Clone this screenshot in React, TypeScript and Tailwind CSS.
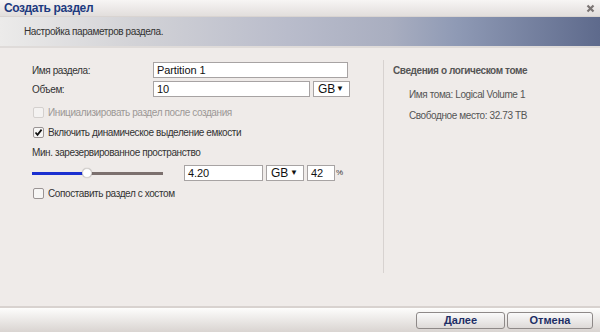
import React from "react";

function Checkbox({ checked, disabled }: { checked?: boolean; disabled?: boolean }) {
  return (
    <span
      className={`flex h-[11px] w-[11px] items-center justify-center rounded-[2px] border ${
        disabled ? "border-[#d4d0ce] bg-[#f4f2f1]" : "border-[#9a9494] bg-[#f7f6f5]"
      }`}
    >
      {checked && (
        <svg width="9" height="9" viewBox="0 0 9 9">
          <path d="M1.5 4.5 L3.5 6.8 L7.6 1.6" fill="none" stroke="#111" strokeWidth="1.7" />
        </svg>
      )}
    </span>
  );
}

function Select({ w }: { w: string }) {
  return (
    <div className={`flex h-[16px] ${w} items-center justify-between border border-[#a7a3a3] bg-white pl-[4px] pr-[5px] text-[12px] tracking-normal text-[#111]`}>
      <span>GB</span>
      <span className="text-[8px]">▼</span>
    </div>
  );
}

export default function App() {
  return (
    <div
      className="flex h-[332px] w-[600px] flex-col overflow-hidden bg-[#efebe9] text-[10px] tracking-[-0.4px] text-[#333]"
      style={{ fontFamily: '"Liberation Sans", Arial, sans-serif' }}
    >
      {/* Title bar */}
      <div className="flex h-[17px] items-center justify-between border-b border-[#d9d4d1] bg-gradient-to-b from-[#f7f5f4] to-[#e2dedc] pl-[4px] pr-[5px]">
        <span className="text-[12px] font-bold tracking-[-0.4px] text-[#1d3a80]">Создать раздел</span>
        <svg width="9" height="9" viewBox="0 0 9 9">
          <path d="M1.5 1.5 L7.5 7.5 M7.5 1.5 L1.5 7.5" stroke="#7b7574" strokeWidth="2.2" />
        </svg>
      </div>
      {/* Banner */}
      <div
        className="flex h-[31px] items-center border-b-2 border-[#dfdbd9] pl-[24px] text-[#333]"
        style={{
          background:
            "linear-gradient(to right, #ecebea 0%, #d3d3d7 22%, #b9bccb 48%, #a9aec0 65%, #8f9ab5 76%, #5e6a8c 100%)",
        }}
      >
        Настройка параметров раздела.
      </div>
      {/* Content */}
      <div className="flex flex-1 pt-[14px]">
        <div className="flex w-[383px] flex-col pl-[32px]">
          <div className="flex h-[16px] items-center">
            <span className="w-[121px]">Имя раздела:</span>
            <div className="flex h-[16px] w-[195px] items-center border border-[#a7a3a3] bg-white px-[3px] text-[11px] tracking-[-0.1px] text-[#111]">
              Partition 1
            </div>
          </div>
          <div className="mt-[3px] flex h-[16px] items-center">
            <span className="w-[121px]">Объем:</span>
            <div className="flex h-[16px] w-[157px] items-center border border-[#a7a3a3] bg-white px-[3px] text-[11px] tracking-[-0.1px] text-[#111]">
              10
            </div>
            <div className="ml-[3px]">
              <Select w="w-[37px]" />
            </div>
          </div>
          <div className="mt-[5px] flex h-[20px] items-center gap-[4px] pl-[1px] text-[#9c9896]">
            <Checkbox disabled />
            <span>Инициализировать раздел после создания</span>
          </div>
          <div className="flex h-[20px] items-center gap-[4px] pl-[1px]">
            <Checkbox checked />
            <span>Включить динамическое выделение емкости</span>
          </div>
          <div className="flex h-[21px] items-center">Мин. зарезервированное пространство</div>
          <div className="flex h-[20px] items-center">
            <div className="relative flex h-[10px] w-[131px] items-center">
              <div className="h-[3px] w-[56px] bg-[#1a2fd0]" />
              <div className="h-[3px] flex-1 bg-[#7c706e]" />
              <div className="absolute left-[50px] top-[0px] h-[10px] w-[10px] rounded-full border border-[#d8d4d2] bg-white shadow-[0_0_1px_rgba(0,0,0,0.3)]" />
            </div>
            <div className="ml-[21px] flex h-[16px] w-[79px] items-center border border-[#a7a3a3] bg-white px-[3px] text-[11px] tracking-[-0.1px] text-[#111]">
              4.20
            </div>
            <div className="ml-[3px]">
              <Select w="w-[38px]" />
            </div>
            <div className="ml-[3px] flex h-[16px] w-[28px] items-center border border-[#a7a3a3] bg-white px-[3px] text-[11px] tracking-[-0.1px] text-[#111]">
              42
            </div>
            <span className="ml-[1px] text-[8px]">%</span>
          </div>
          <div className="flex h-[20px] items-center gap-[4px] pl-[1px]">
            <Checkbox />
            <span>Сопоставить раздел с хостом</span>
          </div>
        </div>
        <div className="mb-[33px] mt-[-2px] w-px bg-[#d7d2d0]" />
        <div className="flex flex-col pl-[9px]">
          <div className="flex h-[16px] items-center font-bold text-[#555]">Сведения о логическом томе</div>
          <div className="mt-[8px] flex h-[16px] items-center pl-[16px] text-[#555]">Имя тома: Logical Volume 1</div>
          <div className="mt-[5px] flex h-[16px] items-center pl-[16px] text-[#555]">Свободное место: 32.73 TB</div>
        </div>
      </div>
      {/* Footer */}
      <div className="flex h-[26px] items-center justify-end gap-[2px] border-t-2 border-[#d8d2cf] bg-gradient-to-b from-[#fdfdfc] to-[#d9d4d1] pr-[7px]">
        <button className="flex h-[17px] w-[89px] items-center justify-center rounded-[3px] border border-[#8e8988] bg-gradient-to-b from-[#fafafa] to-[#dedad8] text-[11px] font-bold tracking-normal text-[#1d2e66]">
          Далее
        </button>
        <button className="flex h-[17px] w-[86px] items-center justify-center rounded-[3px] border border-[#8e8988] bg-gradient-to-b from-[#fafafa] to-[#dedad8] text-[11px] font-bold tracking-normal text-[#1d2e66]">
          Отмена
        </button>
      </div>
    </div>
  );
}
